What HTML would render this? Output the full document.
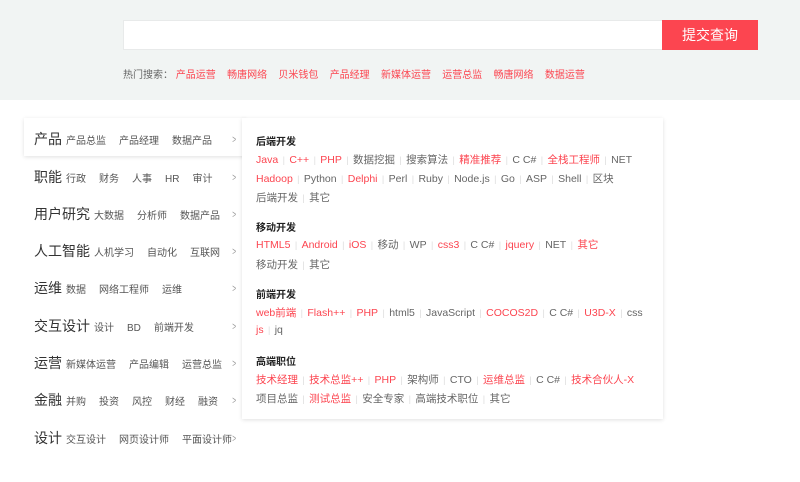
<!DOCTYPE html>
<html><head><meta charset="utf-8"><style>
*{margin:0;padding:0;box-sizing:border-box}
body{width:800px;height:482px;background:#fff;font-family:"Liberation Sans","Noto Sans CJK SC",sans-serif;position:relative;overflow:hidden;color:#333}
.hd{position:absolute;left:0;top:0;width:800px;height:100px;background:#f1f4f3}
.inp{position:absolute;left:123px;top:20px;width:540px;height:30px;background:#fff;border:1px solid #e8eaea}
.btn{position:absolute;left:662px;top:20px;width:96px;height:30px;background:#fc4550;color:#fff;font-size:14px;line-height:30px;text-align:center}
.hot{position:absolute;left:123px;top:66px;font-size:10px;color:#666;white-space:nowrap}
.hot span{color:#fc4550;margin-right:11.3px}
.act{position:absolute;left:24px;top:118px;width:222px;height:38px;background:#fff;box-shadow:0 1px 4px rgba(0,0,0,.12)}
.panel{position:absolute;left:242px;top:118px;width:421px;height:301px;background:#fff;box-shadow:0 1px 4px rgba(0,0,0,.12)}
.m{position:absolute;left:34px;white-space:nowrap;font-size:14px;color:#333}
.m i{font-style:normal;font-size:10px;color:#555;margin-left:4px;margin-right:9px}
.ch{position:absolute;left:231px;font-size:11px;color:#999;transform:scaleX(.6)}
.t{position:absolute;left:256px;font-size:10px;color:#222;font-weight:bold}
.l{position:absolute;left:256px;font-size:10.5px;color:#666;white-space:nowrap}
.l b{font-weight:normal;color:#fc4550}
.l s{text-decoration:none;color:#ddd;margin:0 4.4px;font-size:9px}
</style></head><body>
<div class="hd"></div>
<div class="inp"></div>
<div class="btn">提交查询</div>
<div class="hot">热门搜索： <span>产品运营</span><span>畅唐网络</span><span>贝米钱包</span><span>产品经理</span><span>新媒体运营</span><span>运营总监</span><span>畅唐网络</span><span>数据运营</span></div>

<div class="act"></div>
<div class="panel"></div>

<div class="m" style="top:129px">产品<i>产品总监</i><i>产品经理</i><i>数据产品</i></div>
<div class="m" style="top:167px">职能<i>行政</i><i>财务</i><i>人事</i><i>HR</i><i>审计</i></div>
<div class="m" style="top:204px">用户研究<i>大数据</i><i>分析师</i><i>数据产品</i></div>
<div class="m" style="top:241px">人工智能<i>人机学习</i><i>自动化</i><i>互联网</i></div>
<div class="m" style="top:278px">运维<i>数据</i><i>网络工程师</i><i>运维</i></div>
<div class="m" style="top:316px">交互设计<i>设计</i><i>BD</i><i>前端开发</i></div>
<div class="m" style="top:353px">运营<i>新媒体运营</i><i>产品编辑</i><i>运营总监</i></div>
<div class="m" style="top:390px">金融<i>并购</i><i>投资</i><i>风控</i><i>财经</i><i>融资</i></div>
<div class="m" style="top:428px">设计<i>交互设计</i><i>网页设计师</i><i>平面设计师</i></div>
<div class="ch" style="top:134px">&gt;</div><div class="ch" style="top:172px">&gt;</div><div class="ch" style="top:209px">&gt;</div><div class="ch" style="top:246px">&gt;</div><div class="ch" style="top:283px">&gt;</div><div class="ch" style="top:321px">&gt;</div><div class="ch" style="top:358px">&gt;</div><div class="ch" style="top:395px">&gt;</div><div class="ch" style="top:433px">&gt;</div>

<div class="t" style="top:133px">后端开发</div>
<div class="l" style="top:152px"><b>Java</b><s>|</s><b>C++</b><s>|</s><b>PHP</b><s>|</s>数据挖掘<s>|</s>搜索算法<s>|</s><b>精准推荐</b><s>|</s>C C#<s>|</s><b>全栈工程师</b><s>|</s>NET</div>
<div class="l" style="top:171px"><b>Hadoop</b><s>|</s>Python<s>|</s><b>Delphi</b><s>|</s>Perl<s>|</s>Ruby<s>|</s>Node.js<s>|</s>Go<s>|</s>ASP<s>|</s>Shell<s>|</s>区块</div>
<div class="l" style="top:190px">后端开发<s>|</s>其它</div>
<div class="t" style="top:219px">移动开发</div>
<div class="l" style="top:237px"><b>HTML5</b><s>|</s><b>Android</b><s>|</s><b>iOS</b><s>|</s>移动<s>|</s>WP<s>|</s><b>css3</b><s>|</s>C C#<s>|</s><b>jquery</b><s>|</s>NET<s>|</s><b>其它</b></div>
<div class="l" style="top:257px">移动开发<s>|</s>其它</div>
<div class="t" style="top:286px">前端开发</div>
<div class="l" style="top:305px"><b>web前端</b><s>|</s><b>Flash++</b><s>|</s><b>PHP</b><s>|</s>html5<s>|</s>JavaScript<s>|</s><b>COCOS2D</b><s>|</s>C C#<s>|</s><b>U3D-X</b><s>|</s>css</div>
<div class="l" style="top:324px"><b>js</b><s>|</s>jq</div>
<div class="t" style="top:353px">高端职位</div>
<div class="l" style="top:372px"><b>技术经理</b><s>|</s><b>技术总监++</b><s>|</s><b>PHP</b><s>|</s>架构师<s>|</s>CTO<s>|</s><b>运维总监</b><s>|</s>C C#<s>|</s><b>技术合伙人-X</b></div>
<div class="l" style="top:391px">项目总监<s>|</s><b>测试总监</b><s>|</s>安全专家<s>|</s>高端技术职位<s>|</s>其它</div>
</body></html>
